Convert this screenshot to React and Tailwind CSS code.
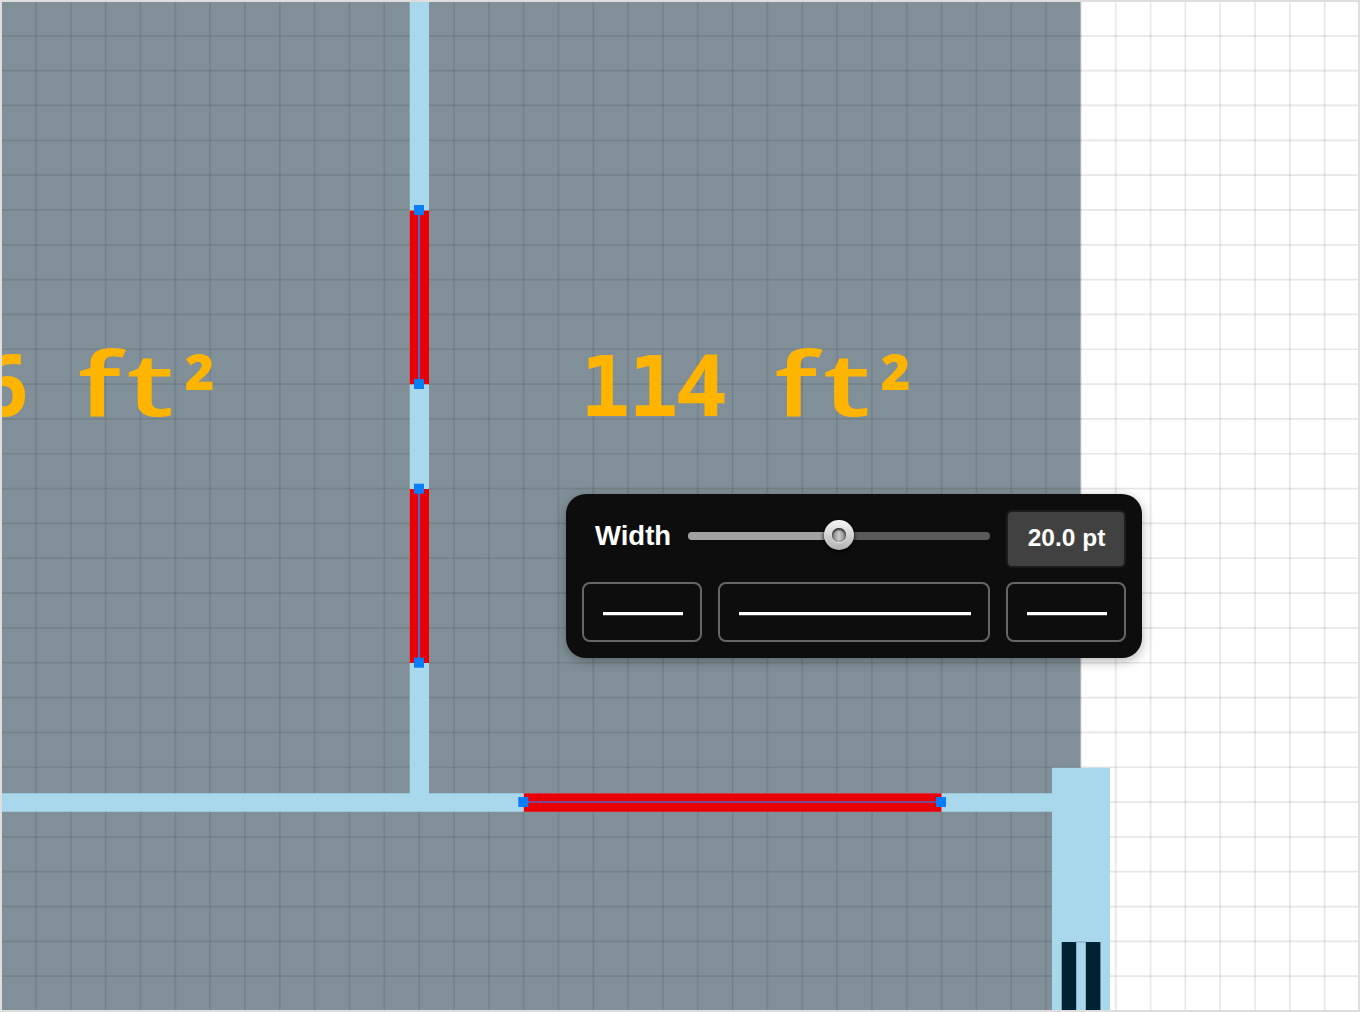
const STEP = 34.83;
const columns = Array.from({ length: 39 }, (_, i) => 36 + i * STEP);
const rows = Array.from({ length: 29 }, (_, i) => 35.8 + i * STEP);

const handles = [
  [419, 210],
  [419, 384],
  [419, 488.7],
  [419, 662.7],
  [523.3, 802],
  [941, 802],
];

function FloorPlan() {
  return (
    <svg className="block h-[1012px] w-[1360px]" viewBox="0 0 1360 1012">
      <rect width="1360" height="1012" fill="#fff" />
      <path d="M0 0H1080.5V790H1070V1012H0Z" fill="#819098" />
      <g stroke="#000" strokeOpacity="0.095" strokeWidth="1.7">
        {columns.map((x) => (
          <path key={x} d={`M${x} 0V1012`} />
        ))}
        {rows.map((y) => (
          <path key={y} d={`M0 ${y}H1360`} />
        ))}
      </g>

      {/* Walls */}
      <path d="M409.7 0H429V793.3H1052V767.8H1110V1012H1052V811.8H0V793.3H409.7Z" fill="#a9d8ec" />

      {/* Window */}
      <path d="M1061.7 942H1076.2V1012H1061.7ZM1085.8 942H1100.4V1012H1085.8Z" fill="#002233" />
      <path d="M1076 942H1086" stroke="#7296a8" strokeWidth="0.7" />

      {/* Doors */}
      <g fill="#e80005">
        <rect x="409.7" y="210.5" width="19.3" height="173.8" />
        <rect x="409.7" y="489" width="19.3" height="174" />
        <rect x="523.8" y="793.3" width="417.7" height="18.5" />
      </g>
      <path d="M419 210V384M419 489V663" stroke="#3f70cf" strokeWidth="2" />
      <path d="M523.5 802H941.5" stroke="#784b91" strokeWidth="2" />
      <g fill="#087eff">
        {handles.map(([x, y]) => (
          <rect key={`${x}-${y}`} x={x - 5} y={y - 5} width="10" height="10" />
        ))}
      </g>

      {/* Area labels */}
      <g fill="#ffb400" fontWeight="700" fontFamily="'Open Sans', 'Noto Sans', sans-serif" fontSize="85.5">
        <text y="416" x="-21">6</text>
        <text transform="translate(78 416) scale(1.38 1.035)" fontWeight="600">f</text>
        <text transform="translate(126.5 416) scale(1.41 1.02)" fontWeight="600">t</text>
        <text transform="translate(184 424.5) scale(0.97)">²</text>
        <text y="416" x="580 628.3" fontFamily="'DejaVu Sans Mono', monospace" fontSize="83.6">11</text>
        <text y="416" x="677">4</text>
        <text transform="translate(774.5 416) scale(1.38 1.035)" fontWeight="600">f</text>
        <text transform="translate(823 416) scale(1.41 1.02)" fontWeight="600">t</text>
        <text transform="translate(880 424.5) scale(0.97)">²</text>
      </g>

      <rect x="1" y="1" width="1358" height="1010" fill="none" stroke="#dedede" strokeWidth="2" />
    </svg>
  );
}

function LineButton() {
  return (
    <button className="flex h-[60px] items-center rounded-lg border-2 border-[#666667] pl-[19px] pr-[17px] pt-[2px]">
      <span className="h-[3px] w-full bg-white shadow-[0_1px_0_#444]" />
    </button>
  );
}

function WidthPanel() {
  return (
    <div className="absolute left-[566px] top-[494px] h-[164px] w-[576px] rounded-[20px] bg-[#0d0d0e] px-4 pt-4 font-['Liberation_Sans',sans-serif] font-bold text-white shadow-[0_3px_12px_rgba(0,0,0,0.3)]">
      <div className="flex h-[60px] items-center">
        <span className="ml-[13px] w-[93px] -translate-y-1 text-[27.5px] leading-none">Width</span>
        <div className="relative mb-[9px] mr-4 h-2 w-[302px] rounded-full bg-[#5a5a5a]">
          <div className="h-2 w-[151px] rounded-l-full bg-[#a1a1a1]" />
          <div className="absolute -top-[12px] left-[136px] flex h-[30px] w-[30px] items-center justify-center rounded-full bg-linear-to-b from-[#f7f7f7] to-[#b2b2b2] shadow-[0_2px_4px_#000]">
            <div className="h-[14px] w-[14px] rounded-full bg-linear-to-r from-[#858585] via-[#c8c8c8] to-[#858585] shadow-[inset_0_2px_2px_#333,inset_0_0_2px_#444,0_1px_0_#eee]" />
          </div>
        </div>
        <div className="mb-[2px] flex h-[58px] w-[120px] items-center justify-center rounded-md border-2 border-[#1c1c1d] bg-[#414141] leading-none">
          <span className="-translate-y-px pl-px text-[24.5px]">20.0 pt</span>
        </div>
      </div>
      <div className="mt-3 grid grid-cols-[120px_272px_120px] gap-4">
        <LineButton />
        <LineButton />
        <LineButton />
      </div>
    </div>
  );
}

export default function App() {
  return (
    <main className="relative h-[1012px] w-[1360px] overflow-hidden">
      <FloorPlan />
      <WidthPanel />
    </main>
  );
}
